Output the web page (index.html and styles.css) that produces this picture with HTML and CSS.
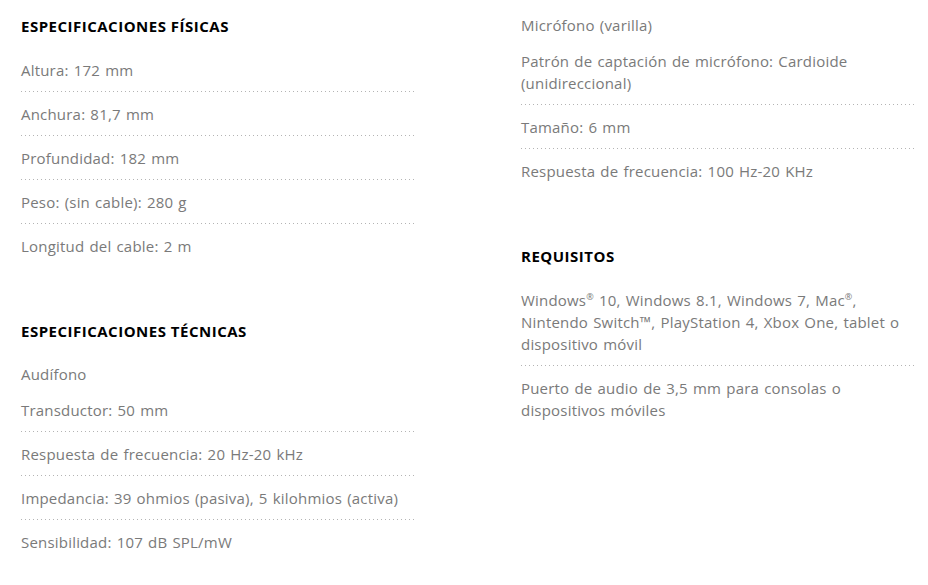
FILE: index.html
```html
<!DOCTYPE html>
<html lang="es">
<head>
<meta charset="utf-8">
<title>Especificaciones</title>
<link rel="stylesheet" href="styles.css">
</head>
<body>
<div class="specs">
  <div class="col col-left">
    <section class="section">
      <h3 class="heading">ESPECIFICACIONES FÍSICAS</h3>
      <ul class="list">
        <li class="item">Altura: 172 mm</li>
        <li class="item">Anchura: 81,7 mm</li>
        <li class="item">Profundidad: 182 mm</li>
        <li class="item">Peso: (sin cable): 280 g</li>
        <li class="item">Longitud del cable: 2 m</li>
      </ul>
    </section>
    <section class="section">
      <h3 class="heading">ESPECIFICACIONES TÉCNICAS</h3>
      <div class="sub">Audífono</div>
      <ul class="list">
        <li class="item">Transductor: 50 mm</li>
        <li class="item">Respuesta de frecuencia: 20 Hz-20 kHz</li>
        <li class="item">Impedancia: 39 ohmios (pasiva), 5 kilohmios (activa)</li>
        <li class="item">Sensibilidad: 107 dB SPL/mW</li>
      </ul>
    </section>
  </div>
  <div class="col col-right">
    <section class="section">
      <div class="sub">Micrófono (varilla)</div>
      <ul class="list">
        <li class="item">Patrón de captación de micrófono: Cardioide (unidireccional)</li>
        <li class="item">Tamaño: 6 mm</li>
        <li class="item">Respuesta de frecuencia: 100 Hz-20 KHz</li>
      </ul>
    </section>
    <section class="section">
      <h3 class="heading">REQUISITOS</h3>
      <ul class="list">
        <li class="item">Windows<sup>®</sup> 10, Windows 8.1, Windows 7, Mac<sup>®</sup>, Nintendo Switch™, PlayStation 4, Xbox One, tablet o dispositivo móvil</li>
        <li class="item">Puerto de audio de 3,5 mm para consolas o dispositivos móviles</li>
      </ul>
    </section>
  </div>
</div>
</body>
</html>
```
FILE: styles.css
```css
html, body {
  margin: 0;
  padding: 0;
  background: #fff;
}
body {
  font-family: "Open Sans", "Liberation Sans", sans-serif;
  font-size: 15px;
  line-height: 22px;
  letter-spacing: 0.2px;
  word-spacing: 1px;
  color: #7a7a7a;
}
.specs {
  display: flex;
  gap: 106px;
  padding-left: 21px;
}
.col {
  width: 394px;
  flex: none;
}
.col-left {
  padding-top: 15px;
}
.col-right {
  padding-top: 4px;
}
.section + .section {
  margin-top: 52px;
}
.heading {
  margin: 0 0 11px;
  font-size: 15px;
  line-height: 22px;
  font-weight: 700;
  letter-spacing: 0.5px;
  word-spacing: 0;
  color: #000;
}
.sub {
  padding: 10px 0 3px;
}
.list {
  list-style: none;
  margin: 0;
  padding: 0;
}
.item {
  padding: 11px 2px 11px 0;
  background-image: linear-gradient(to right, #b4b4b4 1px, transparent 1px);
  background-size: 4px 1px;
  background-repeat: repeat-x;
  background-position: left bottom;
}
.item:last-child {
  background: none;
}
sup {
  font-size: 9px;
  line-height: 0;
  vertical-align: 6px;
}
```
